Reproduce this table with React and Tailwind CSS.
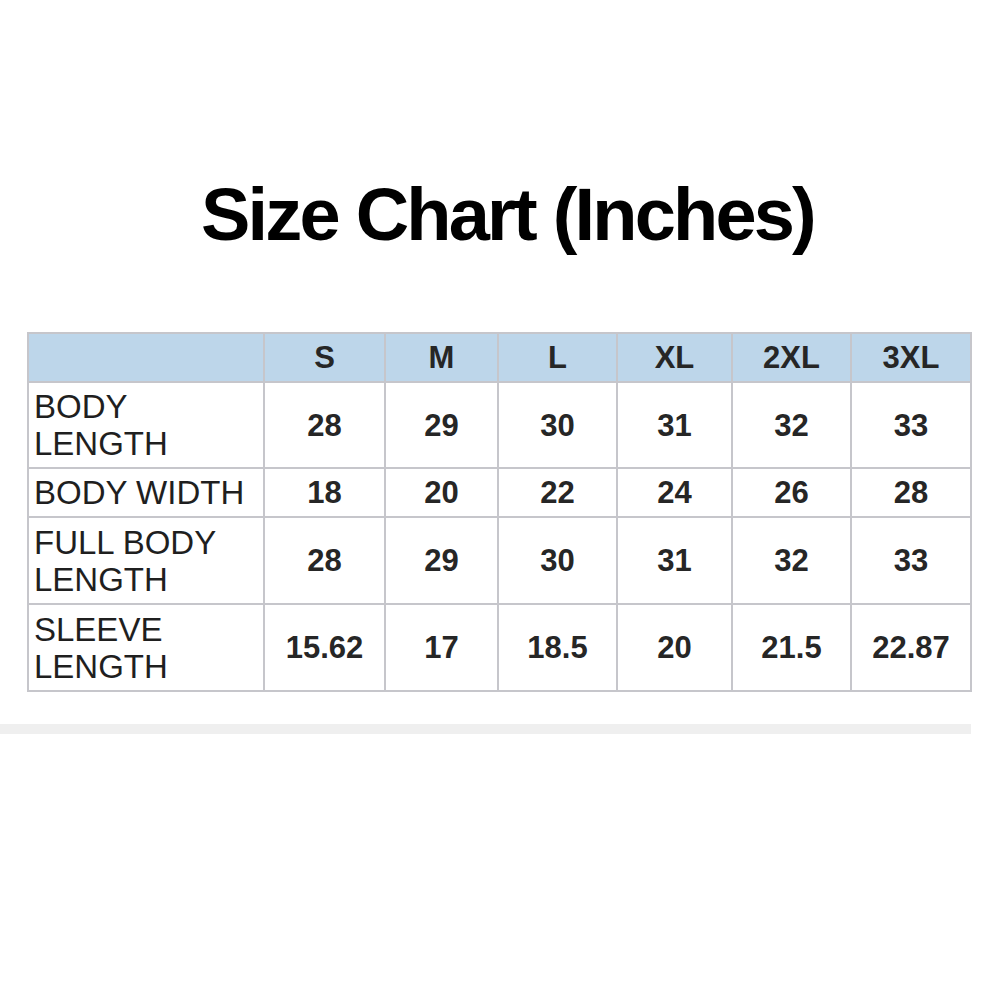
import React from 'react';

const sizes = ['S', 'M', 'L', 'XL', '2XL', '3XL'];

const rows = [
  { label: ['BODY', 'LENGTH'], h: 'h-[86px]', values: ['28', '29', '30', '31', '32', '33'] },
  { label: ['BODY WIDTH'], h: 'h-[49px]', values: ['18', '20', '22', '24', '26', '28'] },
  { label: ['FULL BODY', 'LENGTH'], h: 'h-[87px]', values: ['28', '29', '30', '31', '32', '33'] },
  { label: ['SLEEVE', 'LENGTH'], h: 'h-[87px]', values: ['15.62', '17', '18.5', '20', '21.5', '22.87'] },
];

const colWidths = ['w-[236px]', 'w-[121px]', 'w-[113px]', 'w-[119px]', 'w-[115px]', 'w-[119px]', 'w-[120px]'];

const App = () => {
  return (
    <div className="w-[1001px] h-[1001px] bg-white font-['Liberation_Sans',Arial,sans-serif] overflow-hidden">
      <div className="flex justify-center pl-[14px] pt-[178px]">
        <h1 className="text-[74px] leading-none font-bold tracking-[-2.8px] text-black">Size Chart (Inches)</h1>
      </div>

      <div className="pl-[27px] mt-[80px]">
        <table className="table-fixed border-collapse w-[945px] text-[#262626]">
          <colgroup>
            {colWidths.map((w, i) => (
              <col key={i} className={w} />
            ))}
          </colgroup>
          <thead>
            <tr className="h-[49px] bg-[#bdd6ea]">
              <th className="border-2 border-[#c6c6cb]"></th>
              {sizes.map((s) => (
                <th key={s} className="border-2 border-[#c6c6cb] text-[31px] font-bold text-center align-middle leading-none">
                  {s}
                </th>
              ))}
            </tr>
          </thead>
          <tbody>
            {rows.map((row, i) => (
              <tr key={i} className={row.h}>
                <td className="border-2 border-[#c6c6cb] pl-[5px] text-[33px] leading-[37px] text-[#1f1f1f] align-middle">
                  {row.label.map((l, j) => (
                    <div key={j}>{l}</div>
                  ))}
                </td>
                {row.values.map((v, j) => (
                  <td key={j} className="border-2 border-[#c6c6cb] text-[31px] font-bold text-center align-middle leading-none">
                    {v}
                  </td>
                ))}
              </tr>
            ))}
          </tbody>
        </table>
      </div>

      <div className="mt-[32px] w-[971px] h-[10px] bg-[#efefef]"></div>
    </div>
  );
};

export default App;
